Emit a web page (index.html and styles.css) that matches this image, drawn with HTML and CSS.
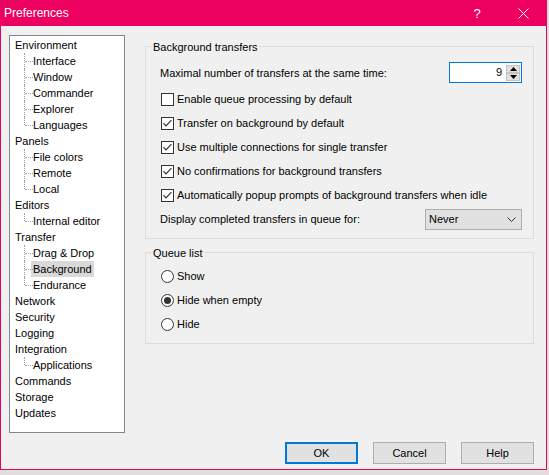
FILE: index.html
```html
<!DOCTYPE html>
<html lang="en">
<head>
<meta charset="utf-8">
<title>Preferences</title>
<link rel="stylesheet" href="styles.css">
</head>
<body>
<div class="window">
  <div class="titlebar">
    <span class="title">Preferences</span>
    <div class="caption">
      <span class="cap-btn cap-help">?</span>
      <span class="cap-btn cap-close">
        <svg width="11" height="11" viewBox="0 0 11 11"><path d="M0.5 0.5 L10.5 10.5 M10.5 0.5 L0.5 10.5" stroke="#fff" stroke-width="1" fill="none"/></svg>
      </span>
    </div>
  </div>

  <div class="client">
    <div class="main">
      <div class="tree">
        <div class="node"><span class="label">Environment</span></div>
        <div class="node child"><span class="label">Interface</span></div>
        <div class="node child"><span class="label">Window</span></div>
        <div class="node child"><span class="label">Commander</span></div>
        <div class="node child"><span class="label">Explorer</span></div>
        <div class="node child last"><span class="label">Languages</span></div>
        <div class="node"><span class="label">Panels</span></div>
        <div class="node child"><span class="label">File colors</span></div>
        <div class="node child"><span class="label">Remote</span></div>
        <div class="node child last"><span class="label">Local</span></div>
        <div class="node"><span class="label">Editors</span></div>
        <div class="node child last"><span class="label">Internal editor</span></div>
        <div class="node"><span class="label">Transfer</span></div>
        <div class="node child"><span class="label">Drag &amp; Drop</span></div>
        <div class="node child"><span class="label selected">Background</span></div>
        <div class="node child last"><span class="label">Endurance</span></div>
        <div class="node"><span class="label">Network</span></div>
        <div class="node"><span class="label">Security</span></div>
        <div class="node"><span class="label">Logging</span></div>
        <div class="node"><span class="label">Integration</span></div>
        <div class="node child last"><span class="label">Applications</span></div>
        <div class="node"><span class="label">Commands</span></div>
        <div class="node"><span class="label">Storage</span></div>
        <div class="node"><span class="label">Updates</span></div>
      </div>

      <div class="pages">
        <div class="group group-transfers">
          <div class="group-title">Background transfers</div>

          <div class="row row-first">
            <span class="text">Maximal number of transfers at the same time:</span>
            <div class="spin">
              <span class="spin-value">9</span>
              <div class="spin-buttons">
                <span class="spin-btn"><svg width="7" height="4" viewBox="0 0 7 4"><path d="M3.5 0 L7 4 L0 4 Z" fill="#000"/></svg></span>
                <span class="spin-btn"><svg width="7" height="4" viewBox="0 0 7 4"><path d="M0 0 L7 0 L3.5 4 Z" fill="#000"/></svg></span>
              </div>
            </div>
          </div>

          <div class="row">
            <span class="check"></span>
            <span class="text">Enable queue processing by default</span>
          </div>
          <div class="row">
            <span class="check checked"><svg width="11" height="11" viewBox="0 0 11 11"><path d="M1.5 5.2 L4 7.8 L9.4 2.2" stroke="#333" stroke-width="1.2" fill="none"/></svg></span>
            <span class="text">Transfer on background by default</span>
          </div>
          <div class="row">
            <span class="check checked"><svg width="11" height="11" viewBox="0 0 11 11"><path d="M1.5 5.2 L4 7.8 L9.4 2.2" stroke="#333" stroke-width="1.2" fill="none"/></svg></span>
            <span class="text">Use multiple connections for single transfer</span>
          </div>
          <div class="row">
            <span class="check checked"><svg width="11" height="11" viewBox="0 0 11 11"><path d="M1.5 5.2 L4 7.8 L9.4 2.2" stroke="#333" stroke-width="1.2" fill="none"/></svg></span>
            <span class="text">No confirmations for background transfers</span>
          </div>
          <div class="row">
            <span class="check checked"><svg width="11" height="11" viewBox="0 0 11 11"><path d="M1.5 5.2 L4 7.8 L9.4 2.2" stroke="#333" stroke-width="1.2" fill="none"/></svg></span>
            <span class="text">Automatically popup prompts of background transfers when idle</span>
          </div>

          <div class="row">
            <span class="text">Display completed transfers in queue for:</span>
            <div class="combo">
              <span class="combo-value">Never</span>
              <svg class="combo-arrow" width="9" height="5" viewBox="0 0 9 5"><path d="M0.5 0.5 L4.5 4.5 L8.5 0.5" stroke="#333" stroke-width="1" fill="none"/></svg>
            </div>
          </div>
        </div>

        <div class="group group-queue">
          <div class="group-title">Queue list</div>
          <div class="row">
            <span class="radio"></span>
            <span class="text">Show</span>
          </div>
          <div class="row">
            <span class="radio on"></span>
            <span class="text">Hide when empty</span>
          </div>
          <div class="row">
            <span class="radio"></span>
            <span class="text">Hide</span>
          </div>
        </div>
      </div>
    </div>

    <div class="buttons">
      <span class="btn default">OK</span>
      <span class="btn">Cancel</span>
      <span class="btn">Help</span>
    </div>
  </div>
</div>
</body>
</html>
```

FILE: styles.css
```css
html, body {
  margin: 0;
  padding: 0;
}

body {
  width: 549px;
  height: 475px;
  overflow: hidden;
  background: #dedede;
  font-family: "Liberation Sans", Arial, sans-serif;
  font-size: 11px;
  color: #000;
}

/* dialog window */
.window {
  width: 547px;
  height: 470px;
  box-sizing: border-box;
  border: 1px solid #ec0060;
  border-top: 0;
  background: #f0f0f0;
  display: flex;
  flex-direction: column;
}

.titlebar {
  height: 26px;
  flex: none;
  background: #ec0060;
  color: #fff;
  display: flex;
  align-items: center;
  padding-left: 3px;
}

.title {
  flex: 1;
  font-size: 12px;
  line-height: 16px;
}

.caption {
  display: flex;
  height: 26px;
}

.cap-btn {
  width: 46px;
  height: 26px;
  display: flex;
  align-items: center;
  justify-content: center;
}

.cap-help {
  font-size: 13px;
}

.client {
  flex: 1;
  display: flex;
  flex-direction: column;
  padding: 9px 12px 0 8px;
}

.main {
  display: flex;
  gap: 20px;
}

/* navigation tree */
.tree {
  width: 116px;
  height: 398px;
  box-sizing: border-box;
  flex: none;
  background: #fff;
  border: 1px solid #828790;
  padding-top: 1px;
}

.node {
  position: relative;
  height: 16px;
  line-height: 16px;
  padding-left: 3px;
  white-space: nowrap;
}

.node .label {
  display: inline-block;
  padding: 0 2px;
  height: 16px;
}

.node .label.selected {
  background: #d9d9d9;
}

.node.child {
  padding-left: 21px;
}

/* dotted connector lines of the tree */
.node.child::before {
  content: "";
  position: absolute;
  left: 14px;
  top: 0;
  bottom: 0;
  border-left: 1px dotted #a0a0a0;
}

.node.child.last::before {
  bottom: 8px;
}

.node.child::after {
  content: "";
  position: absolute;
  left: 15px;
  top: 8px;
  width: 8px;
  border-top: 1px dotted #a0a0a0;
}

/* option pages */
.pages {
  flex: 1;
  min-width: 0;
  margin-top: 11px;
}

.group {
  border: 1px solid #dcdcdc;
  padding: 0 11px 7px 14px;
}

.group-title {
  width: fit-content;
  line-height: 16px;
  padding: 0 1px;
  margin: -8px 0 7px -8px;
  background: #f0f0f0;
}

.group-queue {
  margin-top: 13px;
}

.group-queue .group-title {
  margin-bottom: 3px;
}

.row {
  display: flex;
  align-items: center;
  height: 24px;
  white-space: nowrap;
}

.row-first {
  height: 21px;
  margin-bottom: 4px;
}

.check,
.radio {
  width: 13px;
  height: 13px;
  box-sizing: border-box;
  flex: none;
  border: 1px solid #333;
  background: #fff;
  margin: 0 3px 0 1px;
  display: flex;
  align-items: center;
  justify-content: center;
}

.radio {
  border-radius: 50%;
}

.radio.on::after {
  content: "";
  width: 7px;
  height: 7px;
  border-radius: 50%;
  background: #333;
}

/* spin edit */
.spin {
  margin-left: auto;
  width: 73px;
  height: 21px;
  box-sizing: border-box;
  border: 1px solid #0078d7;
  background: #fff;
  display: flex;
}

.spin-value {
  flex: 1;
  text-align: right;
  line-height: 19px;
  padding-right: 4px;
}

.spin-buttons {
  width: 14px;
  margin: 2px 1px 0 0;
  display: flex;
  flex-direction: column;
}

.spin-btn {
  height: 8px;
  box-sizing: border-box;
  background: #e1e1e1;
  border: 1px solid #c4c4c4;
  display: flex;
  align-items: center;
  justify-content: center;
}

/* drop-down list */
.combo {
  margin-left: auto;
  width: 97px;
  height: 21px;
  box-sizing: border-box;
  background: #e1e1e1;
  border: 1px solid #adadad;
  display: flex;
  align-items: center;
  padding: 0 5px 0 3px;
}

.combo-value {
  flex: 1;
}

/* dialog buttons */
.buttons {
  display: flex;
  justify-content: flex-end;
  gap: 15px;
  margin-top: 9px;
}

.btn {
  width: 73px;
  height: 22px;
  box-sizing: border-box;
  background: #e1e1e1;
  border: 1px solid #adadad;
  display: flex;
  align-items: center;
  justify-content: center;
}

.btn.default {
  border: 2px solid #0078d7;
}
```
